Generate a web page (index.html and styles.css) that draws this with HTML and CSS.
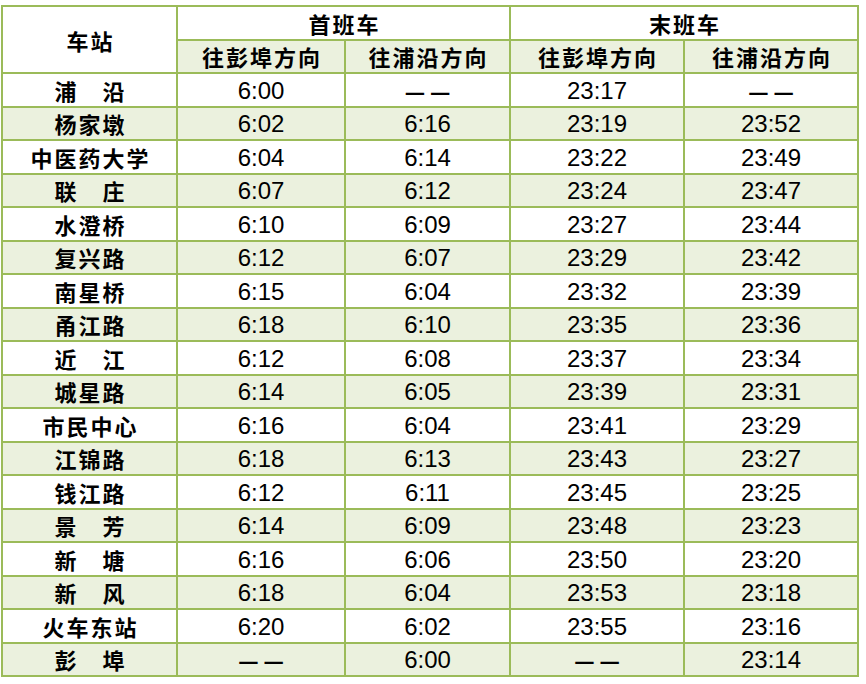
FILE: index.html
```html
<!DOCTYPE html>
<html lang="zh-CN">
<head>
<meta charset="utf-8">
<title>时刻表</title>
<link rel="stylesheet" href="styles.css">
</head>
<body>
<table class="timetable">
  <colgroup>
    <col class="c1"><col class="c2"><col class="c3"><col class="c4"><col class="c5">
  </colgroup>
  <thead>
    <tr class="h1">
      <th rowspan="2" class="station-head">车站</th>
      <th colspan="2">首班车</th>
      <th colspan="2">末班车</th>
    </tr>
    <tr class="h2 alt">
      <th>往彭埠方向</th><th>往浦沿方向</th><th>往彭埠方向</th><th>往浦沿方向</th>
    </tr>
  </thead>
  <tbody>
    <tr><th>浦　沿</th><td>6:00</td><td class="dash">––</td><td>23:17</td><td class="dash">––</td></tr>
    <tr class="alt"><th>杨家墩</th><td>6:02</td><td>6:16</td><td>23:19</td><td>23:52</td></tr>
    <tr><th>中医药大学</th><td>6:04</td><td>6:14</td><td>23:22</td><td>23:49</td></tr>
    <tr class="alt"><th>联　庄</th><td>6:07</td><td>6:12</td><td>23:24</td><td>23:47</td></tr>
    <tr><th>水澄桥</th><td>6:10</td><td>6:09</td><td>23:27</td><td>23:44</td></tr>
    <tr class="alt"><th>复兴路</th><td>6:12</td><td>6:07</td><td>23:29</td><td>23:42</td></tr>
    <tr><th>南星桥</th><td>6:15</td><td>6:04</td><td>23:32</td><td>23:39</td></tr>
    <tr class="alt"><th>甬江路</th><td>6:18</td><td>6:10</td><td>23:35</td><td>23:36</td></tr>
    <tr><th>近　江</th><td>6:12</td><td>6:08</td><td>23:37</td><td>23:34</td></tr>
    <tr class="alt"><th>城星路</th><td>6:14</td><td>6:05</td><td>23:39</td><td>23:31</td></tr>
    <tr><th>市民中心</th><td>6:16</td><td>6:04</td><td>23:41</td><td>23:29</td></tr>
    <tr class="alt"><th>江锦路</th><td>6:18</td><td>6:13</td><td>23:43</td><td>23:27</td></tr>
    <tr><th>钱江路</th><td>6:12</td><td>6:11</td><td>23:45</td><td>23:25</td></tr>
    <tr class="alt"><th>景　芳</th><td>6:14</td><td>6:09</td><td>23:48</td><td>23:23</td></tr>
    <tr><th>新　塘</th><td>6:16</td><td>6:06</td><td>23:50</td><td>23:20</td></tr>
    <tr class="alt"><th>新　风</th><td>6:18</td><td>6:04</td><td>23:53</td><td>23:18</td></tr>
    <tr><th>火车东站</th><td>6:20</td><td>6:02</td><td>23:55</td><td>23:16</td></tr>
    <tr class="alt"><th>彭　埠</th><td class="dash">––</td><td>6:00</td><td class="dash">––</td><td>23:14</td></tr>
  </tbody>
</table>
</body>
</html>
```
FILE: styles.css
```css
html, body {
  margin: 0;
  padding: 0;
  background: #ffffff;
}
body {
  padding: 5px 0 0 1px;
  font-family: "Liberation Sans", "Noto Sans CJK SC", sans-serif;
  color: #000000;
}
.timetable {
  border-collapse: collapse;
  table-layout: fixed;
  width: 858px;
  border: 2px solid #9bbb59;
}
.c1 { width: 175px; }
.c2 { width: 168px; }
.c3 { width: 165px; }
.c4 { width: 174px; }
.c5 { width: 174px; }

.timetable th,
.timetable td {
  border: 2px solid #9bbb59;
  height: 31.5px;
  padding: 0;
  text-align: center;
  vertical-align: middle;
  white-space: nowrap;
  line-height: 24px;
}
.timetable th {
  font-family: "Noto Sans CJK SC", sans-serif;
  font-weight: 700;
  font-size: 22px;
  letter-spacing: 2px;
  text-indent: 2px;
}
.timetable td {
  font-family: "Liberation Sans", sans-serif;
  font-size: 24px;
  font-weight: 400;
  height: 29.5px;
  padding-top: 2px;
}
.timetable .station-head {
  background: #ffffff;
}
.alt th,
.alt td {
  background: #ebf1de;
}
.timetable td.dash {
  font-size: 33px;
  letter-spacing: 7px;
  text-indent: 7px;
}
```
